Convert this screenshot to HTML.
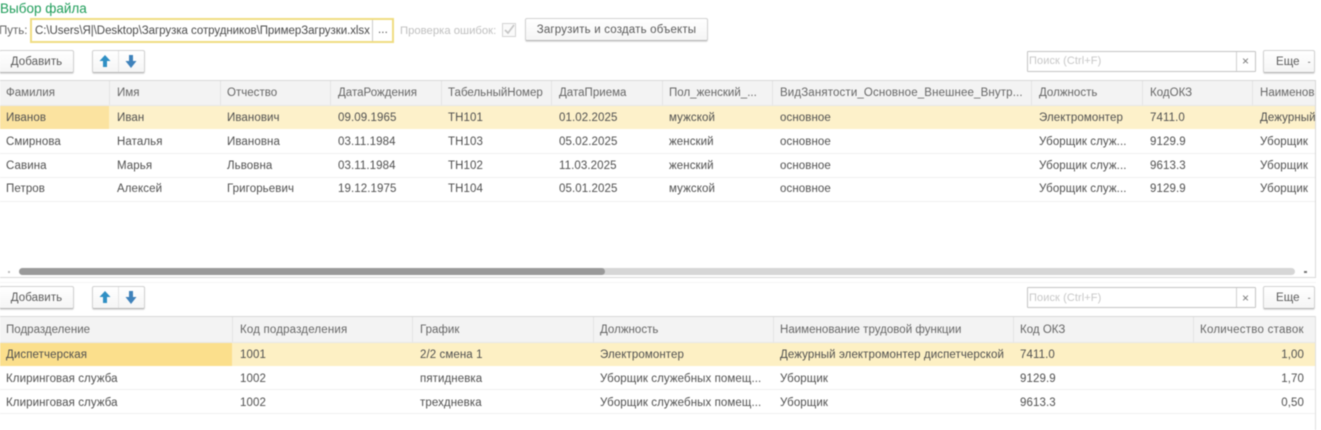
<!DOCTYPE html>
<html><head><meta charset="utf-8">
<style>
html,body{margin:0;padding:0;background:#fff}
#p{position:relative;width:1321px;height:430px;overflow:hidden;background:#fff;font-family:"Liberation Sans",sans-serif;font-size:11.5px;letter-spacing:.09px;color:#505050;filter:blur(.4px)}
#p div{position:absolute;box-sizing:border-box}
.t{white-space:nowrap;line-height:14px;height:14px;margin-top:1px}
.h{color:#666;letter-spacing:.02px}
.btn{background:linear-gradient(#fff,#f5f5f5);border:1px solid #d2d2d2;border-bottom-color:#b8b8b8;border-radius:2px;box-shadow:0 1px 1px #ddd;text-align:center;color:#5a5a5a}
.ln{background:#efefef;height:1px}
.vl{background:#e4e4e4;width:1px}
.s{border:1px solid #c4c4c4;background:#fff;border-radius:1px}
</style></head><body><div id="p">

<div class="t" style="left:0;top:0;font-size:13.5px;letter-spacing:0;line-height:16px;height:16px;color:#1f9d5a">Выбор файла</div>
<div class="t" style="left:-1px;top:23px;color:#666;letter-spacing:0">Путь:</div>
<div style="left:30px;top:18px;width:364px;height:25px;border:2px solid #f0dc82;background:#fff"></div>
<div class="t" style="left:35px;top:23px;font-size:11.5px;letter-spacing:-.05px;color:#4b4b4b">C:\Users\Я|\Desktop\Загрузка сотрудников\ПримерЗагрузки.xlsx</div>
<div class="vl" style="left:372px;top:20px;height:21px;background:#ccc"></div>
<div class="t" style="left:378px;top:22px;color:#555">...</div>
<div class="t" style="left:400px;top:23px;color:#c0c0c0;letter-spacing:0;font-size:11.3px">Проверка ошибок:</div>
<div style="left:502px;top:23px;width:14px;height:14px;border:1px solid #d4d4d4;background:#fafafa"></div>
<svg style="position:absolute;left:502px;top:23px" width="14" height="14"><path d="M3 7l3 3 6-8" fill="none" stroke="#c4c4c4" stroke-width="1.6"/></svg>
<div class="btn" style="left:525px;top:18px;width:183px;height:23px;line-height:23px;letter-spacing:.18px">Загрузить и создать объекты</div>

<!-- toolbar 1 -->
<div class="btn" style="left:-1px;top:50px;width:75px;height:23px;line-height:23px">Добавить</div>
<div class="btn" style="left:92px;top:50px;width:53px;height:23px"></div>
<div class="vl" style="left:118px;top:51px;height:21px"></div>
<svg style="position:absolute;left:92px;top:50px" width="53" height="23"><path d="M13 5l-5.500 6h3.500v6h4v-6h3.500z" fill="#2f8fc4"/><path d="M37 5h4v6h3.500L39 18l-5.500-7H37z" fill="#3f82bb"/></svg>
<div class="s" style="left:1027px;top:51px;width:229px;height:21px"></div>
<div class="vl" style="left:1236px;top:52px;height:19px;background:#d0d0d0"></div>
<div class="t" style="left:1029px;top:53px;color:#c8c8c8;font-size:11px">Поиск (Ctrl+F)</div>
<div class="t" style="left:1242px;top:53px;color:#777;font-size:12px">×</div>
<div class="btn" style="left:1263px;top:50px;width:52px;height:23px;line-height:23px;text-align:left;padding-left:12px;white-space:nowrap">Еще<span style="font-size:9px;margin-left:8px">-</span></div>

<!-- table 1 -->
<div style="left:0;top:80px;width:1316px;height:26px;background:#f3f3f3;border-top:1px solid #d8d8d8;border-bottom:1px solid #e8e8e8"></div>
<div style="left:0;top:106px;width:1315px;height:23px;background:#fdf1ca"></div>
<div style="left:0;top:106px;width:109px;height:23px;background:#fbe3a0"></div>
<div class="vl" style="left:1315px;top:80px;height:198px;background:#d9d9d9"></div>
<div class="ln" style="left:0;top:153px;width:1315px"></div>
<div class="ln" style="left:0;top:177px;width:1315px"></div>
<div class="ln" style="left:0;top:201px;width:1315px"></div>
<div class="vl" style="left:109px;top:81px;height:24px"></div>
<div class="vl" style="left:220px;top:81px;height:24px"></div>
<div class="vl" style="left:330px;top:81px;height:24px"></div>
<div class="vl" style="left:441px;top:81px;height:24px"></div>
<div class="vl" style="left:551px;top:81px;height:24px"></div>
<div class="vl" style="left:662px;top:81px;height:24px"></div>
<div class="vl" style="left:772px;top:81px;height:24px"></div>
<div class="vl" style="left:1031px;top:81px;height:24px"></div>
<div class="vl" style="left:1142px;top:81px;height:24px"></div>
<div class="vl" style="left:1252px;top:81px;height:24px"></div>

<div class="t h" style="left:6px;top:85px">Фамилия</div>
<div class="t h" style="left:117px;top:85px">Имя</div>
<div class="t h" style="left:227px;top:85px">Отчество</div>
<div class="t h" style="left:338px;top:85px">ДатаРождения</div>
<div class="t h" style="left:448px;top:85px">ТабельныйНомер</div>
<div class="t h" style="left:559px;top:85px">ДатаПриема</div>
<div class="t h" style="left:669px;top:85px">Пол_женский_...</div>
<div class="t h" style="left:780px;top:85px;letter-spacing:.14px">ВидЗанятости_Основное_Внешнее_Внутр...</div>
<div class="t h" style="left:1039px;top:85px">Должность</div>
<div class="t h" style="left:1150px;top:85px">КодОКЗ</div>
<div class="t h" style="left:1260px;top:85px;width:55px;overflow:hidden">Наименование</div>

<div class="t" style="left:6px;top:110px">Иванов</div>
<div class="t" style="left:117px;top:110px">Иван</div>
<div class="t" style="left:227px;top:110px">Иванович</div>
<div class="t" style="left:338px;top:110px">09.09.1965</div>
<div class="t" style="left:448px;top:110px">ТН101</div>
<div class="t" style="left:559px;top:110px">01.02.2025</div>
<div class="t" style="left:669px;top:110px">мужской</div>
<div class="t" style="left:780px;top:110px">основное</div>
<div class="t" style="left:1039px;top:110px">Электромонтер</div>
<div class="t" style="left:1150px;top:110px">7411.0</div>
<div class="t" style="left:1260px;top:110px;width:55px;overflow:hidden">Дежурный электромонтер</div>

<div class="t" style="left:6px;top:134px">Смирнова</div>
<div class="t" style="left:117px;top:134px">Наталья</div>
<div class="t" style="left:227px;top:134px">Ивановна</div>
<div class="t" style="left:338px;top:134px">03.11.1984</div>
<div class="t" style="left:448px;top:134px">ТН103</div>
<div class="t" style="left:559px;top:134px">05.02.2025</div>
<div class="t" style="left:669px;top:134px">женский</div>
<div class="t" style="left:780px;top:134px">основное</div>
<div class="t" style="left:1039px;top:134px">Уборщик служ...</div>
<div class="t" style="left:1150px;top:134px">9129.9</div>
<div class="t" style="left:1260px;top:134px">Уборщик</div>

<div class="t" style="left:6px;top:158px">Савина</div>
<div class="t" style="left:117px;top:158px">Марья</div>
<div class="t" style="left:227px;top:158px">Львовна</div>
<div class="t" style="left:338px;top:158px">03.11.1984</div>
<div class="t" style="left:448px;top:158px">ТН102</div>
<div class="t" style="left:559px;top:158px">11.03.2025</div>
<div class="t" style="left:669px;top:158px">женский</div>
<div class="t" style="left:780px;top:158px">основное</div>
<div class="t" style="left:1039px;top:158px">Уборщик служ...</div>
<div class="t" style="left:1150px;top:158px">9613.3</div>
<div class="t" style="left:1260px;top:158px">Уборщик</div>

<div class="t" style="left:6px;top:181px">Петров</div>
<div class="t" style="left:117px;top:181px">Алексей</div>
<div class="t" style="left:227px;top:181px">Григорьевич</div>
<div class="t" style="left:338px;top:181px">19.12.1975</div>
<div class="t" style="left:448px;top:181px">ТН104</div>
<div class="t" style="left:559px;top:181px">05.01.2025</div>
<div class="t" style="left:669px;top:181px">мужской</div>
<div class="t" style="left:780px;top:181px">основное</div>
<div class="t" style="left:1039px;top:181px">Уборщик служ...</div>
<div class="t" style="left:1150px;top:181px">9129.9</div>
<div class="t" style="left:1260px;top:181px">Уборщик</div>

<!-- scrollbar -->
<div style="left:19px;top:268px;width:1276px;height:7px;border-radius:4px;background:#d6d6d6"></div>
<div style="left:19px;top:268px;width:586px;height:7px;border-radius:4px;background:#9a9a9a"></div>
<div style="left:8px;top:271px;width:2px;height:2px;background:#bbb"></div>
<div style="left:1304px;top:271px;width:3px;height:2px;background:#777"></div>
<div style="left:0;top:277px;width:1316px;height:1px;background:#d9d9d9"></div>
<div style="left:0;top:282px;width:1316px;height:1px;background:#f5f5f5"></div>

<!-- toolbar 2 -->
<div class="btn" style="left:-1px;top:286px;width:75px;height:23px;line-height:23px">Добавить</div>
<div class="btn" style="left:92px;top:286px;width:53px;height:23px"></div>
<div class="vl" style="left:118px;top:287px;height:21px"></div>
<svg style="position:absolute;left:92px;top:286px" width="53" height="23"><path d="M13 5l-5.500 6h3.500v6h4v-6h3.500z" fill="#2f8fc4"/><path d="M37 5h4v6h3.500L39 18l-5.500-7H37z" fill="#3f82bb"/></svg>
<div class="s" style="left:1027px;top:287px;width:229px;height:21px"></div>
<div class="vl" style="left:1236px;top:288px;height:19px;background:#d0d0d0"></div>
<div class="t" style="left:1029px;top:290px;color:#c8c8c8;font-size:11px">Поиск (Ctrl+F)</div>
<div class="t" style="left:1242px;top:290px;color:#777;font-size:12px">×</div>
<div class="btn" style="left:1263px;top:286px;width:52px;height:23px;line-height:23px;text-align:left;padding-left:12px;white-space:nowrap">Еще<span style="font-size:9px;margin-left:8px">-</span></div>

<!-- table 2 -->
<div style="left:0;top:316px;width:1316px;height:27px;background:#f3f3f3;border-top:1px solid #d8d8d8;border-bottom:1px solid #e8e8e8"></div>
<div style="left:0;top:343px;width:1315px;height:23px;background:#fdf0c4"></div>
<div style="left:0;top:343px;width:232px;height:23px;background:#fbdf8c"></div>
<div class="vl" style="left:1315px;top:316px;height:114px;background:#e0e0e0"></div>
<div class="ln" style="left:0;top:389px;width:1315px"></div>
<div class="ln" style="left:0;top:413px;width:1315px"></div>
<div class="vl" style="left:232px;top:317px;height:25px"></div>
<div class="vl" style="left:412px;top:317px;height:25px"></div>
<div class="vl" style="left:593px;top:317px;height:25px"></div>
<div class="vl" style="left:773px;top:317px;height:25px"></div>
<div class="vl" style="left:1013px;top:317px;height:25px"></div>
<div class="vl" style="left:1193px;top:317px;height:25px"></div>

<div class="t h" style="left:6px;top:322px">Подразделение</div>
<div class="t h" style="left:240px;top:322px;letter-spacing:.18px">Код подразделения</div>
<div class="t h" style="left:420px;top:322px">График</div>
<div class="t h" style="left:600px;top:322px">Должность</div>
<div class="t h" style="left:780px;top:322px">Наименование трудовой функции</div>
<div class="t h" style="left:1020px;top:322px">Код ОКЗ</div>
<div class="t h" style="left:1200px;top:322px;letter-spacing:.24px">Количество ставок</div>

<div class="t" style="left:6px;top:347px">Диспетчерская</div>
<div class="t" style="left:240px;top:347px">1001</div>
<div class="t" style="left:420px;top:347px">2/2 смена 1</div>
<div class="t" style="left:600px;top:347px">Электромонтер</div>
<div class="t" style="left:780px;top:347px">Дежурный электромонтер диспетчерской</div>
<div class="t" style="left:1020px;top:347px">7411.0</div>
<div class="t" style="right:17px;top:347px">1,00</div>

<div class="t" style="left:6px;top:371px">Клиринговая служба</div>
<div class="t" style="left:240px;top:371px">1002</div>
<div class="t" style="left:420px;top:371px">пятидневка</div>
<div class="t" style="left:600px;top:371px">Уборщик служебных помещ...</div>
<div class="t" style="left:780px;top:371px">Уборщик</div>
<div class="t" style="left:1020px;top:371px">9129.9</div>
<div class="t" style="right:17px;top:371px">1,70</div>

<div class="t" style="left:6px;top:395px">Клиринговая служба</div>
<div class="t" style="left:240px;top:395px">1002</div>
<div class="t" style="left:420px;top:395px">трехдневка</div>
<div class="t" style="left:600px;top:395px">Уборщик служебных помещ...</div>
<div class="t" style="left:780px;top:395px">Уборщик</div>
<div class="t" style="left:1020px;top:395px">9613.3</div>
<div class="t" style="right:17px;top:395px">0,50</div>

</div></body></html>
